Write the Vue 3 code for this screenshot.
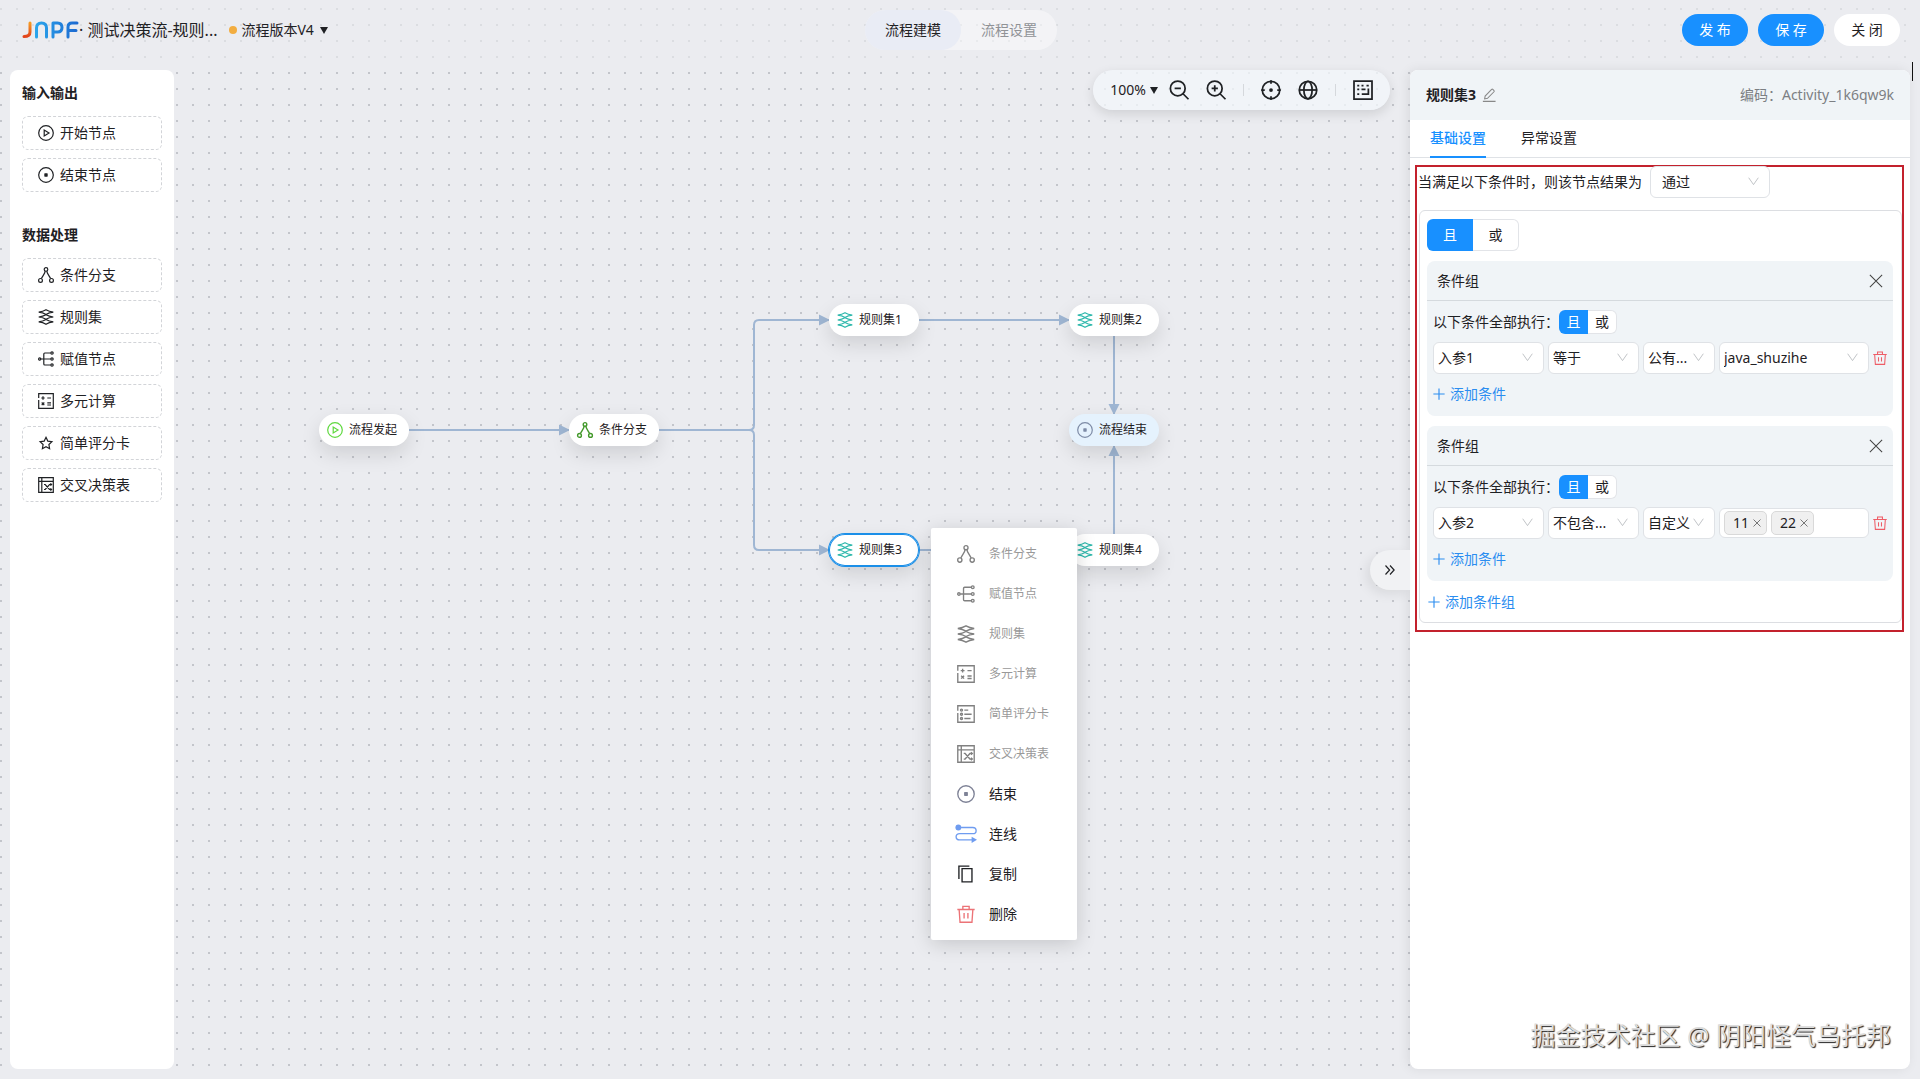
<script setup>
import { ref } from 'vue';

// svg 图标内容，统一使用 16x16 画布
const icons = {
    start: '<circle cx="8" cy="8" r="7.3"/><path d="M6.2 5v6L11 8z"/>',
    end: '<circle cx="8" cy="8" r="7.3"/><rect x="6.3" y="6.3" width="3.4" height="3.4" rx=".6" fill="currentColor" stroke="none"/>',
    branch: '<circle cx="8" cy="2.4" r="1.8"/><circle cx="2.5" cy="13.4" r="1.9"/><circle cx="13.5" cy="13.4" r="1.9"/><path d="M7.2 4.1C7 6.5 4.5 9 3.4 11.6M8.8 4.1C9 6.5 11.5 9 12.6 11.6"/>',
    rules: '<path d="M8 .8Q11 2.6 15.3 3.1 11 3.6 8 5.4 5 3.6.7 3.1 5 2.6 8 .8z"/><path d="M8 5.8Q11 7.500 15.300 8 11 8.500 8 10.200 5 8.500.7 8 5 7.500 8 5.800z"/><path d="M8 10.600Q11 12.400 15.300 12.900 11 13.400 8 15.200 5 13.400.7 12.900 5 12.400 8 10.600z"/>',
    assign: '<circle cx="1.7" cy="8" r="1.1"/><path d="M2.8 8H12.6M12.6 2H6.8Q5.8 2 5.8 3V13Q5.8 14 6.8 14H12.6"/><circle cx="14" cy="2" r="1.2"/><circle cx="14" cy="8" r="1.2"/><circle cx="14" cy="14" r="1.2"/>',
    calc: '<path d="M.7 5V.7H15.3V15.3H.7V7"/><path d="M3.3 5H6.7M5 3.3V6.7M9.3 5H13M9.3 9.8H13M9.3 12H13M3.7 9.5 6.3 12.1M6.3 9.5 3.7 12.1"/>',
    star: '<path d="M8 2.3 9.8 6.1 13.9 6.6 10.9 9.5 11.6 13.7 8 11.7 4.4 13.7 5.1 9.5 2.1 6.6 6.2 6.1z"/>',
    score: '<path d="M.7 5V.7H15.3V15.3H.7V7"/><circle cx="4" cy="4.5" r=".9"/><circle cx="4" cy="8.2" r=".9"/><circle cx="4" cy="12" r=".9"/><path d="M6.5 4.5H10M6.5 8.2H13M6.5 12H12"/>',
    table: '<path d="M.7.7H15.3V15.3H.7zM.7 4.3H15.3M3.8.7V15.3"/><path d="M6 7.5H7.2L11.5 12.5H13.5M6 12.5H7.2L11.5 7.5H13.5M12.4 6.4 13.6 7.5 12.4 8.6M12.4 11.4 13.6 12.5 12.4 13.6"/>',
    link: '<circle cx="1.2" cy="2.2" r="2.6" fill="currentColor" stroke="none"/><path d="M2 2.2H14Q17 2.2 17 5T14 7.7H2.5Q-.8 7.7-.8 10.5T2.5 13.2H14"/><path d="M13 10.5 17.8 13.2 13 16z" fill="currentColor" stroke="none"/>',
    copy: '<path d="M4.5 3.2H13.3V15H4.5zM1.7 12.5V1H11"/>',
    trash: '<path d="M.3 4H15.7M5.2 4V1.2H10.8V4M1.9 4 2.7 15.3H13.3L14.1 4M6.3 7.2V12M9.7 7.2V12"/>',
    edit: '<path d="M1 15.3H15.5M3 12.5 3.6 9.2 11 1.6Q11.7 1 12.4 1.6L13.7 2.9Q14.3 3.6 13.7 4.3L6.3 11.8z"/>',
    zoomOut: '<circle cx="7" cy="6.7" r="5.9"/><path d="M4.5 6.7H9.5M11.2 11 15.6 15.4"/>',
    zoomIn: '<circle cx="7" cy="6.7" r="5.9"/><path d="M4.5 6.7H9.5M7 4.2V9.2M11.2 11 15.6 15.4"/>',
    locate: '<circle cx="8" cy="8" r="7"/><circle cx="8" cy="8" r="1.5" fill="currentColor" stroke="none"/><path d="M8 .2V3M8 13V15.8M.2 8H3M13 8H15.8"/>',
    globe: '<circle cx="8" cy="8" r="7"/><ellipse cx="8" cy="8" rx="3.3" ry="7"/><path d="M1 8H15"/>',
    minimap: '<path d="M.8.8H15.200V15.200H.8z"/><path d="M3.400 4.500H5M6.800 4.500H8.400M10.800 4.500H12.600M3.400 7.500H5M6.800 7.500H10M3.400 11.300H5M12.300 6.800V11.300H7"/>',
    close: '<path d="M1 1 15 15M15 1 1 15"/>',
    plus: '<path d="M8 .5V15.5M.5 8H15.5"/>',
    down: '<path d="M1 2.5 8 12.5 15 2.5"/>',
    collapse: '<path d="M2 2 7.5 8 2 14M8 2 13.5 8 8 14"/>'
};

const ioNodes = [
    { icon: 'start', label: '开始节点' },
    { icon: 'end', label: '结束节点' }
];
const dataNodes = [
    { icon: 'branch', label: '条件分支' },
    { icon: 'rules', label: '规则集' },
    { icon: 'assign', label: '赋值节点' },
    { icon: 'calc', label: '多元计算' },
    { icon: 'star', label: '简单评分卡' },
    { icon: 'table', label: '交叉决策表' }
];
const palette = [
    { title: '输入输出', items: ioNodes },
    { title: '数据处理', items: dataNodes }
];

const flowNodes = [
    { x: 319, y: 414, icon: 'start', type: 'start', label: '流程发起' },
    { x: 569, y: 414, icon: 'branch', type: 'branch', label: '条件分支' },
    { x: 829, y: 304, icon: 'rules', type: 'rules', label: '规则集1' },
    { x: 1069, y: 304, icon: 'rules', type: 'rules', label: '规则集2' },
    { x: 1069, y: 414, icon: 'end', type: 'end', label: '流程结束' },
    { x: 829, y: 534, icon: 'rules', type: 'rules', label: '规则集3', active: true },
    { x: 1069, y: 534, icon: 'rules', type: 'rules', label: '规则集4' }
];
const edges = [
    'M409 430H569',
    'M659 430H749Q754 430 754 425V325Q754 320 759 320H829',
    'M659 430H749Q754 430 754 435V545Q754 550 759 550H829',
    'M919 320H1069',
    'M1114 336V414',
    'M1114 534V446',
    'M919 550H1069'
];

const menu = [
    { icon: 'branch', label: '条件分支', disabled: true },
    { icon: 'assign', label: '赋值节点', disabled: true },
    { icon: 'rules', label: '规则集', disabled: true },
    { icon: 'calc', label: '多元计算', disabled: true },
    { icon: 'score', label: '简单评分卡', disabled: true },
    { icon: 'table', label: '交叉决策表', disabled: true },
    { icon: 'end', label: '结束' },
    { icon: 'link', label: '连线' },
    { icon: 'copy', label: '复制' },
    { icon: 'trash', label: '删除' }
];

const logics = ['且', '或'];
const matchLogic = ref('且');
const groups = ref([
    { logic: '且', field: '入参1', op: '等于', source: '公有...', value: 'java_shuzihe' },
    { logic: '且', field: '入参2', op: '不包含...', source: '自定义', tags: ['11', '22'] }
]);
const newTag = ref('');
const activeTab = ref('基础设置');
const view = ref('流程建模');

function addTag(group) {
    if (newTag.value) group.tags.push(newTag.value);
    newTag.value = '';
}
</script>

<template>
    <div class="page">
        <div class="canvas">
            <svg class="edges">
                <defs>
                    <marker id="arrow" markerUnits="userSpaceOnUse" markerWidth="12" markerHeight="12" refX="10"
                        refY="6" orient="auto">
                        <path d="M0 .5 11 6 0 11.5z" fill="#9fb6d3" />
                    </marker>
                </defs>
                <path v-for="d in edges" :key="d" :d="d" marker-end="url(#arrow)" />
            </svg>
            <div v-for="n in flowNodes" :key="n.label" class="node" :class="[n.type, { active: n.active }]"
                :style="{ left: n.x + 'px', top: n.y + 'px' }">
                <svg class="icon" viewBox="0 0 16 16" v-html="icons[n.icon]"></svg>
                <span>{{ n.label }}</span>
            </div>
            <div class="menu">
                <button v-for="m in menu" :key="m.label" type="button" :class="m.icon" :disabled="m.disabled">
                    <svg class="icon" viewBox="0 0 16 16" v-html="icons[m.icon]"></svg>
                    <span>{{ m.label }}</span>
                </button>
            </div>
        </div>

        <header class="header">
            <div class="header-left">
                <svg class="logo" viewBox="0 0 57 18" fill="none" stroke-width="4" stroke-linecap="round"
                    stroke-linejoin="round">
                    <defs>
                        <linearGradient id="hot" x1="0" y1="0" x2="0" y2="1">
                            <stop offset="0" stop-color="#f59a23" />
                            <stop offset="1" stop-color="#e2441c" />
                        </linearGradient>
                        <linearGradient id="cool" x1="13" y1="0" x2="57" y2="0" gradientUnits="userSpaceOnUse">
                            <stop offset="0" stop-color="#2ba6ec" />
                            <stop offset="1" stop-color="#1b68d0" />
                        </linearGradient>
                    </defs>
                    <path d="M8 2V11Q8 15.5 2 15.5" stroke="url(#hot)" stroke-width="3" />
                    <path d="M14.5 16V7Q14.500 2 19.500 2T24.500 7V16M31 16V2H35.500Q40 2 40 6.500T35.500 11H32M46 16V6Q46 2 50 2H55M46.500 9.500H54"
                        stroke="url(#cool)" stroke-width="3" />
                </svg>
                <span class="flow-name">· 测试决策流-规则...</span>
                <button type="button" class="version"><i class="dot"></i>流程版本V4<i class="caret"></i></button>
            </div>
            <nav class="switch">
                <button v-for="v in ['流程建模', '流程设置']" :key="v" type="button" :class="{ on: view === v }"
                    @click="view = v">{{ v }}</button>
            </nav>
            <div class="header-right">
                <button type="button" class="btn primary">发 布</button>
                <button type="button" class="btn primary">保 存</button>
                <button type="button" class="btn plain">关 闭</button>
            </div>
        </header>

        <main class="body">
            <aside class="palette">
                <section v-for="p in palette" :key="p.title">
                    <h3>{{ p.title }}</h3>
                    <button v-for="item in p.items" :key="item.label" type="button" class="palette-item">
                        <svg class="icon" viewBox="0 0 16 16" v-html="icons[item.icon]"></svg>
                        <span>{{ item.label }}</span>
                    </button>
                </section>
            </aside>

            <div class="stage">
                <div class="toolbar">
                    <button type="button" class="zoom">100%<i class="caret"></i></button>
                    <button type="button" aria-label="缩小"><svg class="icon" viewBox="0 0 16 16"
                            v-html="icons.zoomOut"></svg></button>
                    <button type="button" aria-label="放大"><svg class="icon" viewBox="0 0 16 16"
                            v-html="icons.zoomIn"></svg></button>
                    <i class="divider"></i>
                    <button type="button" aria-label="定位"><svg class="icon" viewBox="0 0 16 16"
                            v-html="icons.locate"></svg></button>
                    <button type="button" aria-label="全局"><svg class="icon" viewBox="0 0 16 16"
                            v-html="icons.globe"></svg></button>
                    <i class="divider"></i>
                    <button type="button" aria-label="小地图"><svg class="icon" viewBox="0 0 16 16"
                            v-html="icons.minimap"></svg></button>
                </div>
            </div>

            <aside class="panel">
                <button type="button" class="collapse" aria-label="收起">
                    <svg class="icon" viewBox="0 0 16 16" v-html="icons.collapse"></svg>
                </button>
                <div class="panel-head">
                    <h2>规则集3</h2>
                    <button type="button" class="ghost edit" aria-label="编辑"><svg class="icon" viewBox="0 0 16 16"
                            v-html="icons.edit"></svg></button>
                    <span class="code">编码：Activity_1k6qw9k</span>
                </div>
                <div class="tabs">
                    <button v-for="t in ['基础设置', '异常设置']" :key="t" type="button" :class="{ on: activeTab === t }"
                        @click="activeTab = t">{{ t }}</button>
                </div>
                <div class="marked">
                    <div class="result-row">
                        <label for="result">当满足以下条件时，则该节点结果为</label>
                        <span class="select result">
                            <select id="result">
                                <option>通过</option>
                            </select>
                            <svg class="icon" viewBox="0 0 16 16" v-html="icons.down"></svg>
                        </span>
                    </div>
                    <div class="rule-box">
                        <div class="segment large">
                            <button v-for="l in logics" :key="l" type="button" :class="{ on: matchLogic === l }"
                                @click="matchLogic = l">{{ l }}</button>
                        </div>
                        <section v-for="(g, i) in groups" :key="i" class="group">
                            <div class="group-head">
                                <span>条件组</span>
                                <button type="button" class="ghost" aria-label="关闭" @click="groups.splice(i, 1)"><svg
                                        class="icon" viewBox="0 0 16 16" v-html="icons.close"></svg></button>
                            </div>
                            <div class="group-body">
                                <div class="group-logic">
                                    <span>以下条件全部执行：</span>
                                    <div class="segment">
                                        <button v-for="l in logics" :key="l" type="button"
                                            :class="{ on: g.logic === l }" @click="g.logic = l">{{ l }}</button>
                                    </div>
                                </div>
                                <div class="condition">
                                    <span v-for="key in ['field', 'op', 'source']" :key="key" class="select"
                                        :class="key">
                                        <select :aria-label="key">
                                            <option>{{ g[key] }}</option>
                                        </select>
                                        <svg class="icon" viewBox="0 0 16 16" v-html="icons.down"></svg>
                                    </span>
                                    <div v-if="g.tags" class="tags value">
                                        <span v-for="(t, k) in g.tags" :key="t" class="tag">{{ t }}
                                            <button type="button" class="ghost" aria-label="移除"
                                                @click="g.tags.splice(k, 1)"><svg class="icon" viewBox="0 0 16 16"
                                                    v-html="icons.close"></svg></button>
                                        </span>
                                        <input v-model="newTag" aria-label="value" @keyup.enter="addTag(g)">
                                    </div>
                                    <span v-else class="select value">
                                        <select aria-label="value">
                                            <option>{{ g.value }}</option>
                                        </select>
                                        <svg class="icon" viewBox="0 0 16 16" v-html="icons.down"></svg>
                                    </span>
                                    <button type="button" class="ghost delete" aria-label="删除"><svg class="icon"
                                            viewBox="0 0 16 16" v-html="icons.trash"></svg></button>
                                </div>
                                <button type="button" class="add"><svg class="icon" viewBox="0 0 16 16"
                                        v-html="icons.plus"></svg>添加条件</button>
                            </div>
                        </section>
                        <button type="button" class="add add-group"><svg class="icon" viewBox="0 0 16 16"
                                v-html="icons.plus"></svg>添加条件组</button>
                    </div>
                </div>
                <i class="text-cursor"></i>
            </aside>
        </main>
        <div class="watermark">掘金技术社区 @ 阴阳怪气乌托邦</div>
    </div>
</template>

<style>
body {
    margin: 0;
}
</style>

<style scoped>
.page {
    position: relative;
    display: flex;
    flex-direction: column;
    min-height: 100vh;
    overflow: hidden;
    background: #ebecf0;
    color: #1f2124;
    font: 14px/20px "Noto Sans", "Noto Sans CJK SC", sans-serif;
}

.page *,
.page *::before {
    box-sizing: border-box;
}

button,
select,
input {
    font: inherit;
    color: inherit;
}

button {
    display: flex;
    align-items: center;
    padding: 0;
    border: 0;
    background: none;
    white-space: nowrap;
    cursor: pointer;
}

h2,
h3 {
    margin: 0;
    font-size: 14px;
    font-weight: 700;
}

.icon {
    width: 16px;
    height: 16px;
    flex: none;
    fill: none;
    stroke: currentColor;
    stroke-width: 1.2;
    overflow: visible;
}

.caret {
    border: 4px solid transparent;
    border-top: 7px solid currentColor;
    border-bottom: 0;
}

/* 画布 */
.canvas {
    position: absolute;
    inset: 0;
    background: radial-gradient(circle at 1px 1px, #c3c5cb 1px, transparent 1px) 0 8px / 16px 16px;
}

.edges {
    width: 100%;
    height: 100%;
    fill: none;
    stroke: #9fb6d3;
    stroke-width: 2;
}

.edges marker path {
    stroke: none;
}

.node {
    position: absolute;
    display: flex;
    align-items: center;
    gap: 6px;
    width: 90px;
    height: 32px;
    padding-left: 8px;
    border-radius: 16px;
    background: #fff;
    box-shadow: 0 8px 20px rgba(0, 0, 0, 0.12);
    font-size: 12px;
    line-height: 22px;
}

.node.start .icon {
    color: #5fd83f;
}

.node.branch .icon {
    color: #43992b;
    stroke-width: 1.4;
}

.node.rules .icon {
    color: #2eb8ac;
}

.node.end {
    background: #e5f2fd;
}

.node.end .icon {
    color: #7d8ba6;
}

.node.active {
    box-shadow: 0 0 0 1px #1b8fe8, inset 0 0 0 1px #1b8fe8, 0 8px 20px rgba(0, 0, 0, 0.12);
}

.menu {
    position: absolute;
    left: 931px;
    top: 528px;
    width: 146px;
    padding: 6px 0;
    border-radius: 2px;
    background: #fff;
    box-shadow: 0 4px 20px rgba(0, 0, 0, 0.16);
}

.menu button {
    width: 100%;
    height: 40px;
    gap: 14px;
    padding-left: 26px;
}

.menu button:disabled {
    color: #999;
    font-size: 12px;
}

.menu .icon {
    width: 18px;
    height: 18px;
}

.menu button:disabled .icon {
    color: #808080;
}

.menu .end .icon {
    color: #7e8296;
}

.menu .link .icon {
    color: #6f9cf0;
}

.menu .trash .icon {
    color: #ec7377;
}

/* 顶部 */
.header {
    position: relative;
    display: grid;
    grid-template-columns: 1fr auto 1fr;
    align-items: center;
    height: 60px;
    padding: 0 20px 0 22px;
    background: rgba(235, 236, 240, 0.6);
}

.header-left,
.header-right {
    display: flex;
    align-items: center;
}

.header-right {
    justify-content: flex-end;
    gap: 10px;
}

.logo {
    width: 57px;
    height: 18px;
}

.flow-name {
    font-size: 16px;
    white-space: nowrap;
}

.version {
    gap: 4px;
    margin-left: 12px;
}

.version .caret {
    margin-left: 2px;
}

.dot {
    width: 8px;
    height: 8px;
    border-radius: 50%;
    background: #f2ad40;
}

.switch {
    display: flex;
    height: 40px;
    border-radius: 20px;
    background: rgba(255, 255, 255, 0.4);
}

.switch button {
    justify-content: center;
    width: 96px;
    border-radius: 20px;
    color: #909296;
}

.switch .on {
    background: #e9ecf5;
    color: #1f2124;
}

.btn {
    justify-content: center;
    width: 66px;
    height: 32px;
    border-radius: 16px;
    background: #fff;
}

.btn.primary {
    background: #1890ff;
    color: #fff;
}

/* 主体 */
.body {
    position: relative;
    display: flex;
    flex: 1;
    padding: 10px;
    pointer-events: none;
}

.body > * {
    pointer-events: auto;
}

.palette {
    display: flex;
    flex-direction: column;
    gap: 33px;
    width: 164px;
    padding: 13px 12px;
    border-radius: 8px;
    background: #fff;
}

.palette section {
    display: flex;
    flex-direction: column;
    gap: 8px;
}

.palette h3 {
    margin-bottom: 5px;
}

.palette-item {
    height: 34px;
    gap: 6px;
    padding-left: 15px;
    border: 1px dashed #d2d4d8;
    border-radius: 6px;
}

.body .stage {
    display: flex;
    flex: 1;
    justify-content: flex-end;
    align-items: flex-start;
    padding-right: 20px;
    pointer-events: none;
}

.toolbar {
    display: flex;
    align-items: center;
    gap: 17px;
    height: 40px;
    padding: 0 17px;
    border-radius: 20px;
    background: rgba(243, 247, 251, 0.75);
    box-shadow: 0 4px 12px rgba(0, 0, 0, 0.12);
    pointer-events: auto;
}

.toolbar .zoom {
    gap: 4px;
    margin-right: -6px;
}

.toolbar .icon {
    width: 20px;
    height: 20px;
    stroke-width: 1.4;
}

.divider {
    width: 1px;
    height: 12px;
    background: #d5d8dc;
}

/* 属性面板 */
.panel {
    position: relative;
    width: 500px;
    border-radius: 8px;
    background: #fff;
    box-shadow: -2px 0 12px rgba(0, 0, 0, 0.08);
}

.collapse {
    position: absolute;
    top: 480px;
    left: -40px;
    width: 40px;
    height: 40px;
    padding-left: 14px;
    border-radius: 20px 0 0 20px;
    background: #f1f2f4;
    box-shadow: -4px 4px 12px rgba(0, 0, 0, 0.08);
}

.collapse .icon {
    width: 12px;
    height: 12px;
    stroke-width: 1.6;
}

.text-cursor {
    position: absolute;
    top: -8px;
    right: -3px;
    width: 1px;
    height: 19px;
    background: #111;
}

.panel-head {
    display: flex;
    align-items: center;
    gap: 6px;
    height: 50px;
    padding: 0 16px;
    border-radius: 8px 8px 0 0;
    background: #f0f4f7;
}

.ghost {
    color: #444;
}

.ghost .icon {
    width: 14px;
    height: 14px;
}

.edit {
    color: #888;
}

.code {
    margin-left: auto;
    color: #7c7f83;
}

.tabs {
    display: flex;
    gap: 35px;
    height: 38px;
    padding-left: 20px;
    border-bottom: 1px solid #dfe2e6;
}

.tabs button {
    height: 38px;
    border-bottom: 2px solid transparent;
}

.tabs .on {
    border-color: #1890ff;
    color: #1890ff;
    font-weight: 500;
}

.marked {
    margin: 7px 6px 0 5px;
    padding: 0 0 7px 2px;
    border: 2px solid #c3212d;
}

.result-row {
    display: flex;
    align-items: center;
    gap: 8px;
    margin: -1px 0 12px -1px;
}

.select {
    position: relative;
    display: flex;
}

.select select {
    width: 100%;
    height: 32px;
    padding: 0 4px;
    border: 1px solid #dfe2e6;
    border-radius: 6px;
    background: #fff;
    appearance: none;
}

.select .icon {
    position: absolute;
    top: 10px;
    right: 11px;
    width: 11px;
    height: 11px;
    color: #b4b7bb;
    pointer-events: none;
}

.result {
    width: 120px;
}

.result select {
    padding-left: 11px;
}

.rule-box {
    display: flex;
    flex-direction: column;
    gap: 10px;
    padding: 8px 8px 9px 7px;
    border: 1px solid #dcdee2;
    border-radius: 6px;
}

.segment {
    display: flex;
}

.segment button {
    justify-content: center;
    width: 29px;
    height: 24px;
    border: 1px solid #e2e4e8;
    border-left: 0;
    border-radius: 0 6px 6px 0;
    background: #fff;
}

.segment .on {
    border: 0;
    border-radius: 6px 0 0 6px;
    background: #1890ff;
    color: #fff;
}

.segment.large button {
    width: 46px;
    height: 32px;
}

.group {
    border-radius: 8px;
    background: #f0f4f7;
}

.group-head {
    display: flex;
    align-items: center;
    justify-content: space-between;
    height: 40px;
    padding: 0 10px;
    border-bottom: 1px solid #d5dade;
}

.group-body {
    padding: 9px 6px 7px;
}

.group-logic {
    display: flex;
    align-items: center;
}

.condition {
    display: flex;
    align-items: center;
    gap: 4px;
    margin: 8px 0 5px;
}

.field {
    width: 111px;
}

.op {
    width: 91px;
}

.source {
    width: 72px;
}

.value {
    flex: 1;
    min-width: 0;
}

.tags {
    display: flex;
    align-items: center;
    gap: 4px;
    height: 30px;
    padding: 0 4px;
    border: 1px solid #dfe2e6;
    border-radius: 6px;
    background: #fff;
}

.tag {
    display: flex;
    align-items: center;
    justify-content: flex-end;
    gap: 4px;
    width: 43px;
    height: 24px;
    padding-right: 5px;
    border: 1px solid #d9d9d9;
    border-radius: 5px;
    background: #f0f0f0;
}

.tag .icon {
    width: 8px;
    height: 8px;
    color: #777;
    stroke-width: 2;
}

.tags input {
    flex: 1;
    min-width: 0;
    border: 0;
    outline: 0;
    background: none;
}

.delete {
    color: #ee5c66;
}

.add {
    gap: 5px;
    height: 30px;
    color: #2b8df0;
}

.add .icon {
    width: 12px;
    height: 12px;
    stroke-width: 1.5;
}

.add-group {
    height: 22px;
    padding-left: 1px;
}

.watermark {
    position: absolute;
    right: 29px;
    bottom: 26px;
    color: #dcdcdc;
    font-size: 25px;
    line-height: 36px;
    text-shadow: 1px 1px 1px #222;
}
</style>
